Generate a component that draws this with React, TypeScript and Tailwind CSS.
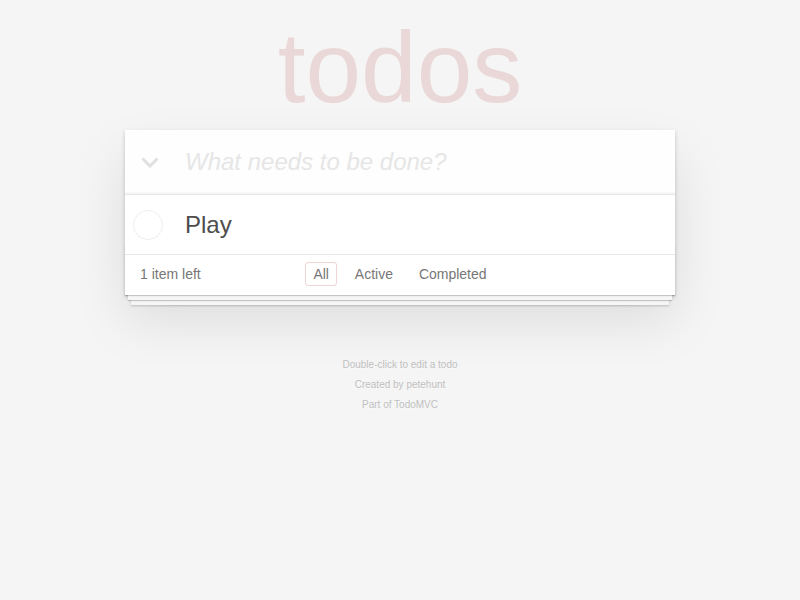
import React, { useState } from 'react';

type Todo = { id: number; title: string; completed: boolean };

const filters = ['All', 'Active', 'Completed'];

const App = () => {
  const [todos] = useState<Todo[]>([{ id: 1, title: 'Play', completed: false }]);
  const [filter] = useState('All');

  const left = todos.filter((t) => !t.completed).length;

  return (
    <div className="min-h-screen bg-[#f5f5f5] text-[14px] leading-[19.6px] text-[#4d4d4d] font-['Liberation_Sans',Arial,sans-serif] pt-[17px]">
      <div className="w-[550px] mx-auto">
        <h1 className="h-[100px] text-[100px] leading-[100px] text-center font-extralight text-[rgba(175,47,47,0.15)]">
          todos
        </h1>

        {/* app card */}
        <section className="mt-[13px] bg-white shadow-[0_2px_4px_0_rgba(0,0,0,0.2),0_25px_50px_0_rgba(0,0,0,0.1)]">
          <header className="flex items-center h-[64px] bg-[rgba(0,0,0,0.003)] shadow-[inset_0_-2px_1px_rgba(0,0,0,0.03)]">
            <div className="w-[60px] flex justify-start pl-[16px]">
              <svg width="18" height="11" viewBox="0 0 18 11" fill="none">
                <polyline points="1.5,1.5 9,9 16.5,1.5" stroke="#e0e0e0" strokeWidth="3" strokeLinejoin="miter" />
              </svg>
            </div>
            <input
              className="flex-1 h-full pr-4 bg-transparent outline-none text-[24px] leading-[33.6px] text-[#4d4d4d] placeholder:italic placeholder:text-[#e6e6e6]"
              placeholder="What needs to be done?"
            />
          </header>

          <ul className="border-t border-[#e6e6e6]">
            {todos.map((todo) => (
              <li key={todo.id} className="flex items-center border-b border-[#ededed] last:border-b-0">
                <div className="w-[60px] flex pl-[8px]">
                  <svg width="30" height="30" viewBox="0 0 30 30">
                    <circle cx="15" cy="15" r="14.5" fill="none" stroke="#ededed" strokeWidth="1" />
                  </svg>
                </div>
                <label className="block py-[15px] pr-[15px] text-[24px] leading-[29px] text-[#4d4d4d]">
                  {todo.title}
                </label>
              </li>
            ))}
          </ul>

          <footer className="relative grid grid-cols-[1fr_auto_1fr] items-center h-[41px] px-[15px] py-[10px] border-t border-[#e6e6e6] text-[#777]">
            <div className="absolute inset-x-0 bottom-0 h-[50px] overflow-hidden pointer-events-none shadow-[0_1px_1px_rgba(0,0,0,0.2),0_8px_0_-3px_#f6f6f6,0_9px_1px_-3px_rgba(0,0,0,0.2),0_16px_0_-6px_#f6f6f6,0_17px_2px_-6px_rgba(0,0,0,0.2)]" />
            <span className="text-left">
              <strong className="font-normal">{left}</strong> item left
            </span>
            <ul className="text-center whitespace-nowrap">
              {filters.map((f, i) => (
                <React.Fragment key={f}>
                  {i > 0 && ' '}
                  <li className="inline">
                    <a
                      className={`m-[3px] px-[7px] py-[3px] border rounded-[3px] ${
                        f === filter ? 'border-[rgba(175,47,47,0.2)]' : 'border-transparent'
                      }`}
                    >
                      {f}
                    </a>
                  </li>
                </React.Fragment>
              ))}
            </ul>
            <span />
          </footer>
        </section>

        <footer className="mt-[65px] text-center text-[10px] text-[#bfbfbf] [text-shadow:0_1px_0_rgba(255,255,255,0.5)]">
          <p className="leading-none my-[10px]">Double-click to edit a todo</p>
          <p className="leading-none my-[10px]">Created by petehunt</p>
          <p className="leading-none my-[10px]">Part of TodoMVC</p>
        </footer>
      </div>
    </div>
  );
};

export default App;
